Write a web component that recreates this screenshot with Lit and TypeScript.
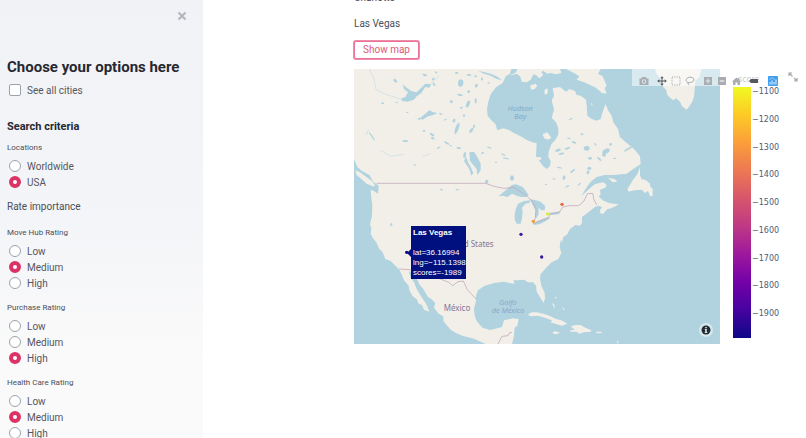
import { LitElement, html, css, svg } from "lit";
import { customElement, property } from "lit/decorators.js";

interface RatingGroup {
  name: string;
  label: string;
  options: string[];
  selected: string;
}

const LEVELS = ["Low", "Medium", "High"];

const LOCATIONS: RatingGroup = {
  name: "locations",
  label: "Locations",
  options: ["Worldwide", "USA"],
  selected: "USA",
};

const RATINGS: RatingGroup[] = [
  { name: "movehub", label: "Move Hub Rating", options: LEVELS, selected: "Medium" },
  { name: "purchase", label: "Purchase Rating", options: LEVELS, selected: "High" },
  { name: "health", label: "Health Care Rating", options: LEVELS, selected: "Medium" },
];

const TICKS = [1100, 1200, 1300, 1400, 1500, 1600, 1700, 1800, 1900];

/* Small inland lakes: centre, radii, rotation. */
const LAKES: number[][] = [
  [124, 35, 7, 4, 40], [86, 103, 4, 3, 0], [128, 100, 4, 2, 0], [212, 18, 7, 3, 20],
  [238, 30, 5, 3, -40], [240, 46, 6, 3, 50], [320, 42, 8, 11, 10], [345, 18, 7, 3, 10],
  [365, 22, 4, 3, 0], [367, 50, 4, 6, 30], [318, 78, 8, 3, 10], [344, 68, 4, 4, 0],
  [292, 98, 5, 4, 30], [342, 105, 5, 11, 20], [322, 116, 4, 3, 0], [365, 95, 3, 8, 0],
  [300, 155, 4, 6, 20], [309, 178, 5, 18, 20], [352, 184, 9, 4, -50], [360, 172, 3, 5, 10],
  [196, 149, 5, 3, 0], [260, 135, 5, 2, 20], [274, 152, 5, 2, -20], [210, 186, 4, 3, 0],
  [234, 197, 8, 3, 35], [154, 216, 9, 3, 0], [236, 208, 6, 3, 10], [278, 222, 9, 3, 30],
  [254, 236, 6, 2, -30], [314, 237, 7, 3, 10], [290, 230, 4, 2, 0], [332, 258, 4, 9, 10],
  [474, 327, 6, 8, 0], [398, 338, 5, 6, 20], [406, 236, 7, 2, 20], [448, 257, 8, 2, 20],
  [386, 252, 5, 2, -20], [456, 268, 10, 2, 10], [426, 280, 4, 2, 0], [54, 202, 2, 16, -35],
  [40, 190, 1, 10, 30], [612, 244, 9, 4, -20], [640, 238, 9, 3, -20], [622, 254, 9, 3, -10],
  [660, 220, 7, 3, 20], [650, 150, 7, 2, -30], [698, 238, 9, 7, 10], [756, 247, 12, 7, -30],
  [750, 258, 6, 5, 20], [736, 270, 8, 3, 40], [708, 268, 6, 4, 0], [822, 240, 14, 3, -30],
  [656, 306, 9, 3, -35], [630, 326, 4, 7, 10], [616, 296, 8, 2, 10], [706, 298, 6, 5, 0],
  [702, 310, 4, 6, 20], [645, 208, 6, 2, 10], [684, 196, 4, 3, 0], [724, 226, 5, 2, 40],
  [770, 226, 4, 4, 0], [782, 268, 5, 2, 0], [600, 330, 5, 2, 30], [640, 352, 7, 2, -30],
  [576, 346, 4, 2, 0], [676, 346, 7, 2, -40], [384, 30, 3, 5, 0], [404, 42, 4, 2, 0],
  [262, 362, 5, 2, 20], [310, 362, 6, 2, 0], [112, 467, 3, 5, 20], [182, 288, 4, 2, 0],
  [308, 12, 5, 3, 0], [246, 10, 5, 2, 30], [160, 130, 4, 2, 0], [330, 140, 3, 4, 0],
];

const CITIES: { x: number; y: number; fill: string }[] = [
  { x: 624, y: 406, fill: "#e8663f" },
  { x: 581, y: 435, fill: "#d9ee3c" },
  { x: 538, y: 457, fill: "#f2a02c" },
  { x: 501, y: 496, fill: "#3a1a9c" },
  { x: 563, y: 564, fill: "#3a1a9c" },
  { x: 158, y: 550, fill: "#0d0887" },
];

@customElement("radio-group")
class RadioGroup extends LitElement {
  @property({ attribute: false }) group: RatingGroup = LOCATIONS;

  static styles = css`
    :host {
      display: block;
    }
    .group {
      border: 0;
      margin: 0;
      padding: 0;
      min-width: 0;
    }
    .title {
      padding: 0;
      height: 18px;
      font-size: 8px;
      line-height: 16px;
      color: #4b4e5a;
    }
    .option {
      display: flex;
      align-items: center;
      gap: 6px;
      height: 16px;
      font-size: 10px;
      color: #55585f;
    }
    .radio {
      appearance: none;
      box-sizing: border-box;
      width: 12px;
      height: 12px;
      margin: 0 0 0 2px;
      border: 1px solid #9aa3ab;
      border-radius: 50%;
      background: #fff;
    }
    .radio:checked {
      border: 4px solid #dc3366;
    }
  `;

  render() {
    const g = this.group;
    return html`<fieldset class="group">
      <legend class="title">${g.label}</legend>
      ${g.options.map(
        (o) => html`<label class="option">
          <input class="radio" type="radio" name=${g.name} value=${o} ?checked=${o === g.selected} />
          ${o}
        </label>`
      )}
    </fieldset>`;
  }
}

@customElement("city-map")
class CityMap extends LitElement {
  static styles = css`
    :host {
      display: block;
      position: relative;
      height: 275px;
      overflow: hidden;
      background: #b0d3df;
    }
    .map {
      display: block;
      width: 100%;
      height: 100%;
    }
    .land {
      fill: #f2efe9;
    }
    .water {
      fill: #b0d3df;
    }
    .stream {
      fill: none;
      stroke: #c6dde4;
      stroke-width: 2;
    }
    .border {
      fill: none;
      stroke: #c5a9bb;
      stroke-width: 3;
      stroke-linejoin: round;
      opacity: 0.8;
    }
    .country {
      font: 24px "Noto Sans", sans-serif;
      fill: #877593;
    }
    .sea {
      font: italic 22px "Noto Sans", sans-serif;
      fill: #86a9c9;
      text-anchor: middle;
    }
    .tip {
      position: absolute;
      left: 57px;
      top: 157px;
      box-sizing: border-box;
      width: 55px;
      height: 53px;
      padding: 2px 0 0 2px;
      background: #00107f;
      color: #fff;
      font: 8px/10px "Liberation Sans", Arial, sans-serif;
      white-space: nowrap;
    }
    .tip::before {
      content: "";
      position: absolute;
      left: -4px;
      top: 23px;
      border: 4px solid transparent;
      border-left: 0;
      border-right-color: #00107f;
    }
    .tip b {
      display: block;
      margin-bottom: 10px;
    }
    .tip span {
      display: block;
    }
    .info {
      position: absolute;
      right: 7px;
      bottom: 7px;
      width: 14px;
      height: 14px;
      padding: 0;
      border: 0;
      border-radius: 50%;
      background: #d5e8ee;
    }
    .info svg {
      display: block;
    }
  `;

  render() {
    return html`
      <svg class="map" viewBox="0 0 1098 825" preserveAspectRatio="xMinYMin slice" role="img" aria-label="City map">
        <path class="land" d="M0 0H472L468 14 455 22 446 42 426 55 410 76 403 98 399 120 401 140 412 154 424 164 430 184 448 178 466 184 480 192 500 202 520 214 535 220 548 223 546 262 558 278 566 290 578 300 588 292 590 276 583 264 584 248 592 226 606 210 613 196 613 178 606 160 593 146 600 122 593 94 600 80 596 58 618 54 636 68 646 60 663 66 668 78 680 80 696 92 698 110 700 140 713 150 728 155 740 150 748 122 755 105 762 124 773 140 778 160 792 180 798 205 818 222 840 240 858 262 860 285 843 296 818 314 778 318 752 318 728 324 710 338 696 358 683 380 703 362 723 345 748 340 758 348 754 356 738 362 740 376 734 382 746 394 764 402 780 404 795 406 772 418 760 420 748 434 740 434 738 424 744 414 733 410 723 414 703 430 684 444 684 462 678 470 664 468 648 480 640 496 628 504 624 520 620 512 617 535 622 552 613 570 593 580 576 597 560 615 558 628 562 650 572 672 573 690 568 701 558 684 548 668 546 650 538 640 522 640 510 632 492 634 478 634 482 644 466 642 450 638 420 642 392 650 372 664 366 680 365 700 360 720 362 740 368 756 385 776 408 783 430 778 444 774 450 754 476 748 494 750 490 770 482 776 480 800 474 825H395L375 816 360 809 325 800 306 792 290 782 268 756 268 742 254 734 240 716 244 702 232 690 222 684 208 660 196 646 190 632 176 614 164 606 170 626 180 640 188 660 200 680 208 692 218 708 226 728 210 722 204 708 194 704 188 690 176 682 166 664 164 650 150 634 144 618 136 602 122 588 110 576 94 570 86 550 76 540 68 522 56 506 50 494 52 478 48 466 54 440 55 408 52 386 50 362 60 366 72 374 74 350 58 338 46 318 24 306 10 294 0 270Z"></path>
        <path class="land" d="M4 304 18 310 34 322 54 336 64 350 56 352 38 344 22 330 8 318ZM466 20 486 10 490 0H572L562 10 568 18 556 28 546 18 538 16 530 32 518 40 504 38 498 22 488 14ZM528 50 544 44 550 50 542 60 532 62ZM572 62 580 58 582 70 576 78 571 72ZM560 0H618L622 12 606 16 590 12 580 14ZM636 0H740L732 14 746 22 758 50 752 58 758 74 744 72 726 56 708 48 690 40 668 32 676 22 660 12ZM566 196 580 190 592 206 582 212 570 208ZM548 264 560 264 562 272 552 272ZM710 102 716 104 714 110ZM762 326 782 330 790 338 776 340ZM903 0H1043L1036 24 1024 36 1022 60 1020 84 1014 100 1006 112 998 122 984 112 978 98 966 88 958 94 950 88 940 78 936 62 928 54 918 26 908 16ZM858 295 850 316 836 334 828 348 820 360 824 368 840 364 864 362 872 372 882 366 888 382 896 380 896 360 888 352 888 344 876 334 862 330 858 318Z"></path>
        <path class="land" d="M522 736 534 730 548 730 568 734 588 741 606 750 622 754 640 764 624 770 604 764 590 760 594 754 572 746 552 740 534 742 526 740ZM650 772 664 768 680 768 694 776 712 784 710 788 690 790 676 794 668 788 650 788 648 784 662 782ZM596 789 606 787 618 792 608 795 598 794ZM726 788 742 788 744 792 728 793ZM594 702 600 706 604 720 598 712ZM602 684 608 684 606 690ZM626 714 632 722 628 724ZM790 812 794 820 790 825Z"></path>
        <path class="water" d="M142 88 154 84 162 70 150 60 146 46 160 58 172 66 188 70 204 54 214 44 232 46 226 56 214 54 202 72 188 82 180 92 160 98 144 96ZM198 148 214 134 226 124 238 130 250 132 238 138 222 142 206 152ZM346 250 360 248 370 264 380 284 380 304 370 318 368 300 358 288 348 276ZM336 262 342 280 350 294 358 312 352 320 346 300 338 288 330 276Z"></path>
        <path class="water" d="M433 382 448 370 462 358 474 348 486 346 506 354 514 364 524 378 516 384 500 384 488 380 474 374 460 384 446 380ZM530 394 510 396 492 404 486 418 482 436 482 452 488 464 500 464 504 448 506 430 504 416 514 404 526 402ZM528 390 546 394 560 398 574 412 572 424 562 424 554 416 554 436 548 446 543 446 545 424 536 408ZM538 464 550 456 566 450 584 443 588 448 572 458 556 466 540 468ZM582 432 600 430 620 428 614 436 590 438Z"></path>
        <path class="water" d="M372 6 394 10 414 16 432 24 444 34 428 30 410 20 390 14Z"></path>
        ${LAKES.map(
          ([x, y, rx, ry, a]) => svg`<ellipse class="water" cx=${x} cy=${y} rx=${rx} ry=${ry} transform="rotate(${a} ${x} ${y})"></ellipse>`
        )}
        <path class="stream" d="M46 0 60 30 66 62 90 74 120 84 144 92M230 44 256 20M206 262 230 254M80 244 110 262 150 256"></path>
        <path class="border" d="M68 343H395L420 352 450 358 480 355 515 378 534 396 546 420 544 446 538 464 584 446 588 436 618 428 626 414 646 410H674L690 396 700 374 716 373 720 392 728 408M135 600 168 602 190 618 214 622 240 622 284 640 296 650 312 638 328 636 340 662 366 690M432 825 444 802 462 800 466 792 474 790"></path>
        <text class="country" x="419" y="533" text-anchor="end">United States</text>
        <text class="country" x="309" y="727" text-anchor="middle">México</text>
        <text class="sea" x="499" y="125">Hudson</text>
        <text class="sea" x="499" y="150">Bay</text>
        <text class="sea" x="462" y="708">Golfo</text>
        <text class="sea" x="462" y="733">de México</text>
        ${CITIES.map((c) => svg`<circle cx=${c.x} cy=${c.y} r="5" fill=${c.fill}></circle>`)}
      </svg>
      <div class="tip">
        <b>Las Vegas</b>
        <span>lat=36.16994</span>
        <span>lng=−115.1398</span>
        <span>scores=-1989</span>
      </div>
      <button class="info" aria-label="Map attribution">
        <svg width="14" height="14" viewBox="0 0 14 14">
          <circle cx="7" cy="7" r="4.5" fill="#222b30"></circle>
          <path d="M6.2 4h1.6v1.3H6.2zM5.8 6h2v3h.5v.9H5.7V9h.5V6.9h-.4z" fill="#d5e8ee"></path>
        </svg>
      </button>
    `;
  }
}

@customElement("plot-toolbar")
class PlotToolbar extends LitElement {
  static styles = css`
    :host {
      display: flex;
      align-items: center;
      box-sizing: border-box;
      height: 17px;
      padding: 6px 8px 0 7px;
      background: rgba(255, 255, 255, 0.5);
    }
    .set {
      display: flex;
      gap: 4px;
      margin-right: 8px;
    }
    .set:last-child {
      margin-right: 0;
    }
    .tool {
      display: block;
      width: 10px;
      height: 10px;
      padding: 0;
      border: 0;
      background: none;
      color: #a9acb0;
    }
    .tool.active {
      color: #55585c;
    }
    .tool svg {
      display: block;
      overflow: visible;
    }
    .zoom {
      margin-right: 4px;
    }
    .wide {
      gap: 9px;
    }
  `;

  private tool(label: string, shape: unknown, active = false) {
    return html`<button class="tool ${active ? "active" : ""}" aria-label=${label}>
      <svg width="10" height="10" viewBox="0 0 10 10">${shape}</svg>
    </button>`;
  }

  render() {
    return html`
      <div class="set">
        ${this.tool("Download plot as a png", svg`<path fill-rule="evenodd" fill="currentColor" d="M.5 2.5h2L3.3 1h3.4l.8 1.5h2V9h-9zM5 3.3a2.3 2.3 0 1 0 0 4.6 2.3 2.3 0 0 0 0-4.6zm0 1a1.3 1.3 0 1 1 0 2.6 1.3 1.3 0 0 1 0-2.6z"></path>`)}
      </div>
      <div class="set">
        ${this.tool("Pan", svg`<path fill="currentColor" d="M5 .2 6.800 2.300H5.500v2.200h2.200V3.200L9.800 5 7.700 6.800V5.500H5.500v2.200h1.300L5 9.800 3.200 7.700h1.300V5.500H2.300v1.300L.2 5l2.100-1.800v1.300h2.200V2.300H3.200z"></path>`, true)}
        ${this.tool("Box select", svg`<rect x="1" y="1" width="8" height="8" fill="none" stroke="currentColor" stroke-width="1" stroke-dasharray="1.2 1.1"></rect>`)}
        ${this.tool("Lasso select", svg`<path fill="none" stroke="currentColor" stroke-width="1" d="M3.2 6.8C1.6 6 .8 4.8 1.2 3.5 1.8 1.8 4 1 6 1.2 8 1.4 9.2 2.6 8.9 4 8.5 5.8 6 7 3.8 6.5 2.6 6.3 2.2 7.2 3 7.5 4 7.8 3.8 8.6 3.4 9.2"></path>`)}
      </div>
      <div class="set zoom">
        ${this.tool("Zoom in", svg`<path fill="currentColor" fill-rule="evenodd" d="M1 1h8v8H1zM4.4 2.6v1.8H2.6v1.2h1.8v1.8h1.2V5.6h1.8V4.4H5.6V2.6z"></path>`)}
        ${this.tool("Zoom out", svg`<path fill="currentColor" fill-rule="evenodd" d="M1 1h8v8H1zM2.6 4.4v1.2h4.8V4.4z"></path>`)}
      </div>
      <div class="set wide">
        ${this.tool("Reset view", svg`<path fill="currentColor" d="M1 5.5 5.500 1.500 7 2.800V2h1v1.700L10 5.500H9V9H6.500V6.500h-2V9H2V5.500z"></path>`)}
        ${this.tool("Toggle show closest data on hover", svg`<path fill="currentColor" d="M-1 5 1 3h7v4H1z"></path>`, true)}
      </div>
      <div class="set">
        ${this.tool("Produced with Plotly", svg`<rect width="10" height="10" rx="1" fill="#3f9fee"></rect><path fill="none" stroke="#fff" d="M2 8.500V6M4 8.500V4.500M6 8.500V6M8 8.500V3.500M1.500 3h1M3.500 2h1M5.500 3h1" opacity=".9"></path>`)}
      </div>
    `;
  }
}

@customElement("app-root")
class AppRoot extends LitElement {
  static styles = css`
    :host {
      display: flex;
      height: 100vh;
      overflow: hidden;
      background: #fff;
      color: #4b4e57;
      font-family: Roboto, "Noto Sans", sans-serif;
      font-size: 10px;
    }
    .sidebar {
      flex: none;
      box-sizing: border-box;
      width: 203px;
      padding: 0 16px 0 7px;
      overflow: hidden;
      background: linear-gradient(180deg, #f0f2f6 0, #f4f5f8 50%, #fafafa 82%);
    }
    .top {
      display: flex;
      justify-content: flex-end;
      align-items: center;
      height: 32px;
      margin-bottom: 21px;
    }
    .close {
      width: 10px;
      height: 10px;
      padding: 0;
      border: 0;
      background: none;
    }
    .close svg {
      display: block;
    }
    .title {
      margin: 0;
      font-size: 15px;
      line-height: 28px;
      font-weight: 700;
      color: #262730;
      white-space: nowrap;
    }
    .check {
      display: flex;
      align-items: center;
      gap: 6px;
      height: 18px;
      color: #55585f;
    }
    .box {
      appearance: none;
      box-sizing: border-box;
      width: 12px;
      height: 12px;
      margin: 0 0 0 2px;
      border: 1px solid #9aa3ab;
      border-radius: 2px;
      background: #fff;
    }
    .subtitle {
      margin: 18px 0 3px;
      font-size: 11px;
      line-height: 20px;
      font-weight: 700;
      color: #262730;
    }
    .note {
      margin: 8px 0 9px;
      line-height: 18px;
    }
    .ratings {
      display: grid;
      gap: 9px;
    }
    .main {
      flex: 1;
      min-width: 0;
      padding-left: 151px;
      overflow: hidden;
    }
    .cities {
      display: grid;
      gap: 10px;
      margin-top: -10px;
    }
    .cities p {
      margin: 0;
      line-height: 16px;
    }
    .show {
      display: block;
      height: 18px;
      margin: 9px 0 10px;
      padding: 0 8px;
      border: 1px solid #ea7096;
      border-radius: 2px;
      box-shadow: 0 0 0 1px #ee8cac;
      background: #fff;
      color: #e2587a;
      font: inherit;
      line-height: 16px;
    }
    .chart {
      position: relative;
      display: grid;
      grid-template-columns: minmax(0, 1fr) 86px;
    }
    .scale {
      display: grid;
      grid-template-columns: 18px 1fr;
      grid-template-rows: 18px 251px;
      column-gap: 1px;
      padding-left: 13px;
    }
    .caption {
      grid-column: 1 / -1;
      padding: 6px 0 0 5px;
      font: 8px/10px "DejaVu Sans", sans-serif;
      color: #8c93a0;
    }
    .ramp {
      background: linear-gradient(
        180deg,
        #f0f921 0%,
        #fdca26 11%,
        #fb9f3a 22%,
        #ed7953 33%,
        #d8576b 44%,
        #bd3786 56%,
        #9c179e 67%,
        #7201a8 78%,
        #46039f 89%,
        #0d0887 100%
      );
    }
    .ticks {
      display: flex;
      flex-direction: column;
      justify-content: space-between;
      margin: 0;
      padding: 0 0 19px;
      list-style: none;
      font: 8px/10px "DejaVu Sans", sans-serif;
      color: #4d5d78;
    }
    .toolbar {
      position: absolute;
      top: 0;
      right: 20px;
    }
    .expand {
      position: absolute;
      top: 3px;
      right: 8px;
      width: 10px;
      height: 10px;
      padding: 0;
      border: 0;
      background: none;
    }
    .expand svg {
      display: block;
    }
  `;

  render() {
    return html`
      <aside class="sidebar">
        <div class="top">
          <button class="close" aria-label="Close">
            <svg width="10" height="10" viewBox="0 0 10 10"><path d="M1.5 1.5 8.5 8.5M8.5 1.5 1.5 8.5" stroke="#b4b6bb" stroke-width="2.2"></path></svg>
          </button>
        </div>
        <h1 class="title">Choose your options here</h1>
        <label class="check"><input class="box" type="checkbox" />See all cities</label>
        <h2 class="subtitle">Search criteria</h2>
        <radio-group .group=${LOCATIONS}></radio-group>
        <p class="note">Rate importance</p>
        <div class="ratings">${RATINGS.map((g) => html`<radio-group .group=${g}></radio-group>`)}</div>
      </aside>
      <main class="main">
        <div class="cities">
          <p>Charlotte</p>
          <p>Las Vegas</p>
        </div>
        <button class="show">Show map</button>
        <section class="chart">
          <city-map></city-map>
          <div class="scale">
            <div class="caption">score</div>
            <div class="ramp"></div>
            <ul class="ticks">
              ${TICKS.map((t) => html`<li>−${t}</li>`)}
            </ul>
          </div>
          <plot-toolbar class="toolbar"></plot-toolbar>
          <button class="expand" aria-label="View fullscreen">
            <svg width="10" height="10" viewBox="0 0 10 10"><path d="M4.5 4.5 1 1M1 4V1h3M6 6l3 3M9 6v3H6" fill="none" stroke="#a6a8ac" stroke-width="1.2"></path></svg>
          </button>
        </section>
      </main>
    `;
  }
}
